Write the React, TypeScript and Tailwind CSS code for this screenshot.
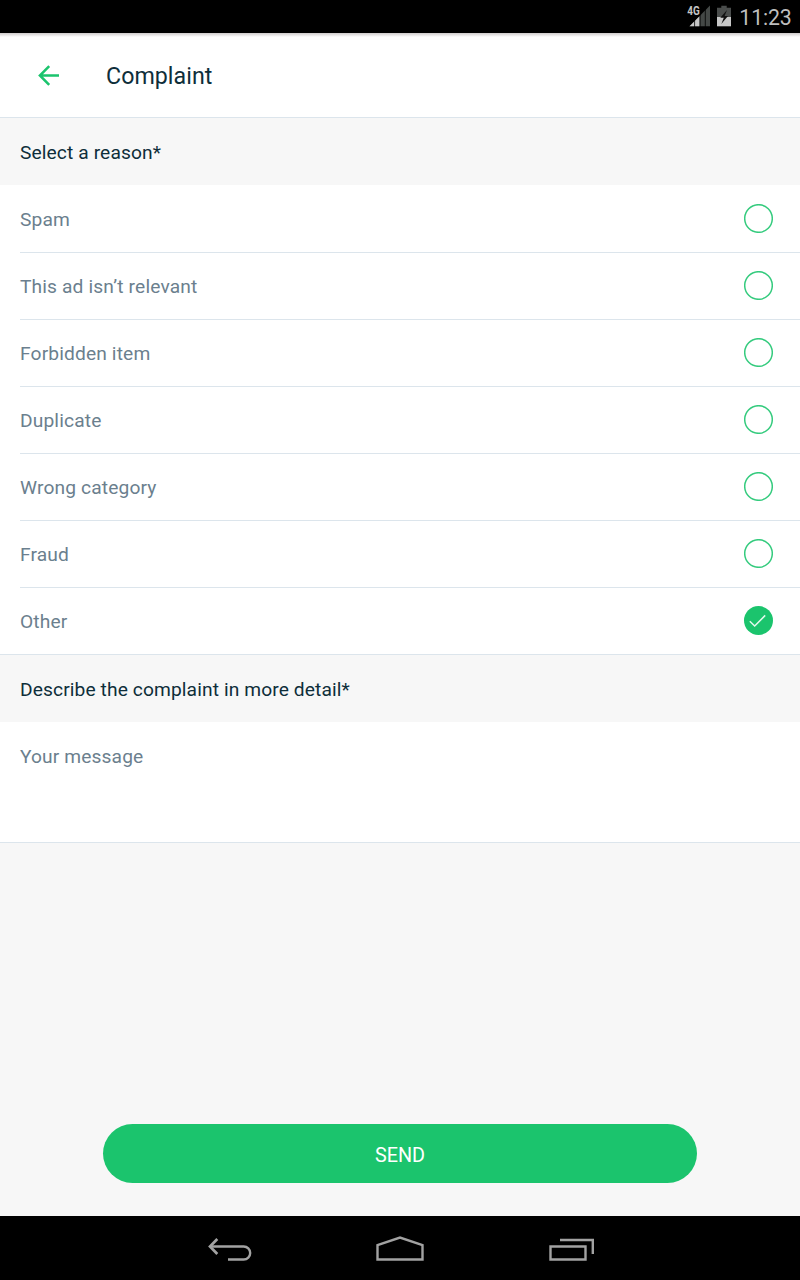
import { useState } from "react";

const reasons = [
  "Spam",
  "This ad isn’t relevant",
  "Forbidden item",
  "Duplicate",
  "Wrong category",
  "Fraud",
  "Other",
];

function StatusBar() {
  return (
    <div className="flex h-[33px] shrink-0 items-start bg-black">
      <svg width="130" height="33" viewBox="0 0 130 33" className="ml-auto">
        <path d="M40 5.5 V26.3 H19.5 Z" fill="#444846" />
        <path d="M19.5 26.3 L29.5 16.3 V26.3 Z" fill="#c8c8c8" />
        <path d="M24.6 10 V27 M30.1 10 V27 M35.3 5 V27" stroke="#000" strokeWidth="0.8" />
        <path d="M16 4 H30.3 V15 L28 17 H16 Z" fill="#000" />
        <text x="17.3" y="15.2" fill="#c4c4c4" fontSize="13.5" fontWeight="700" textLength="12.5" lengthAdjust="spacingAndGlyphs">4G</text>
        <path d="M51.3 5.7 H56.7 V7.7 H61 V17 H47 V7.7 H51.3 Z" fill="#4a4d4c" />
        <path d="M47 17 H61 V26.3 H47 Z" fill="#c8c8c8" />
        <path d="M57 10 L50.3 17.7 H53.8 L51.3 24 L58 16 H54.6 Z" fill="#111" />
        <text x="69.3" y="25" fill="#bebebe" fontSize="21.3" textLength="52.5">11:23</text>
      </svg>
    </div>
  );
}

function SectionTitle({ children }: { children: string }) {
  return (
    <h2 className="h-[67px] shrink-0 bg-[#f7f7f7] px-5 pt-[21px] text-[19.2px] leading-[28px] tracking-[0.11px] text-[#0e2e3a]">
      {children}
    </h2>
  );
}

function Radio({ checked }: { checked: boolean }) {
  return (
    <svg width="29" height="29" viewBox="0 0 29 29" fill="none" className="mb-[2px]">
      {checked ? (
        <>
          <circle cx="14.5" cy="14.5" r="14.5" fill="#1bc46d" />
          <path d="M5.8 15.2 L10.7 20 L21.2 9.4" stroke="#e4f8ed" strokeWidth="1.5" />
        </>
      ) : (
        <circle cx="14.5" cy="14.5" r="13.8" stroke="#35cb7e" strokeWidth="1.5" />
      )}
    </svg>
  );
}

export default function App() {
  const [selected, setSelected] = useState("Other");
  return (
    <div className="flex h-[1280px] w-[800px] flex-col overflow-hidden bg-[#f7f7f7] font-['Roboto',sans-serif]">
      <StatusBar />
      <header className="flex h-[85px] shrink-0 items-center border-b border-[#dce5ec] bg-white bg-linear-to-b from-[#cfcbcb] to-white to-[4px] pl-[38px]">
        <button aria-label="Back" className="pt-px">
          <svg width="22" height="21" viewBox="0 0 22 21" fill="none" stroke="#1bc46d" strokeWidth="2.5" className="block">
            <path d="M21 10.5 H2 M11.2 1.1 L1.9 10.5 L11.2 19.9" />
          </svg>
        </button>
        <h1 className="ml-[46px] pt-[2px] text-[23.2px] tracking-[0.05px] text-[#0e2e3a]">Complaint</h1>
      </header>
      <SectionTitle>Select a reason*</SectionTitle>
      <div className="shrink-0 bg-white pt-px">
        {reasons.map((reason, i) => (
          <div key={reason} className={i === reasons.length - 1 ? "border-b border-[#dce5ec] pl-5" : "pl-5"}>
            <button
              onClick={() => setSelected(reason)}
              className={
                i === reasons.length - 1
                  ? "flex h-[66px] w-full items-center justify-between pr-[27px]"
                  : "flex h-[67px] w-full items-center justify-between border-b border-[#dce5ec] pr-[27px]"
              }
            >
              <span className="pt-[2px] text-[19.2px] leading-[28px] tracking-[0.14px] text-[#6b7f8e]">{reason}</span>
              <Radio checked={selected === reason} />
            </button>
          </div>
        ))}
      </div>
      <SectionTitle>Describe the complaint in more detail*</SectionTitle>
      <div className="h-[121px] shrink-0 border-b border-[#dce5ec] bg-white px-5 pt-[21px] text-[19.2px] leading-[28px] tracking-[0.12px] text-[#6b7f8e]">
        Your message
      </div>
      <div className="mt-auto flex shrink-0 justify-center pb-[33px]">
        <button className="h-[59px] w-[594px] rounded-full bg-[#1bc46d] pt-[5px] text-[19.8px] leading-[28px] text-white">SEND</button>
      </div>
      <nav className="flex h-16 shrink-0 justify-center bg-black">
        <svg width="420" height="64" viewBox="0 0 420 64" fill="none" stroke="#a2a2a2" strokeWidth="2.4">
          <path d="M20 30.5 H53.7 A6.5 6.5 0 0 1 53.7 43.5 H38" />
          <path d="M27.3 23 L20 30.5 L27.3 38" strokeWidth="2.7" />
          <path d="M187.5 43.5 V29 L210 21.5 L232.5 29 V43.5 Z" />
          <path d="M170.5 30.5 H205.5 V43.5 H170.5 Z M180 24 H212.8 V38" transform="translate(190 0)" />
        </svg>
      </nav>
    </div>
  );
}
